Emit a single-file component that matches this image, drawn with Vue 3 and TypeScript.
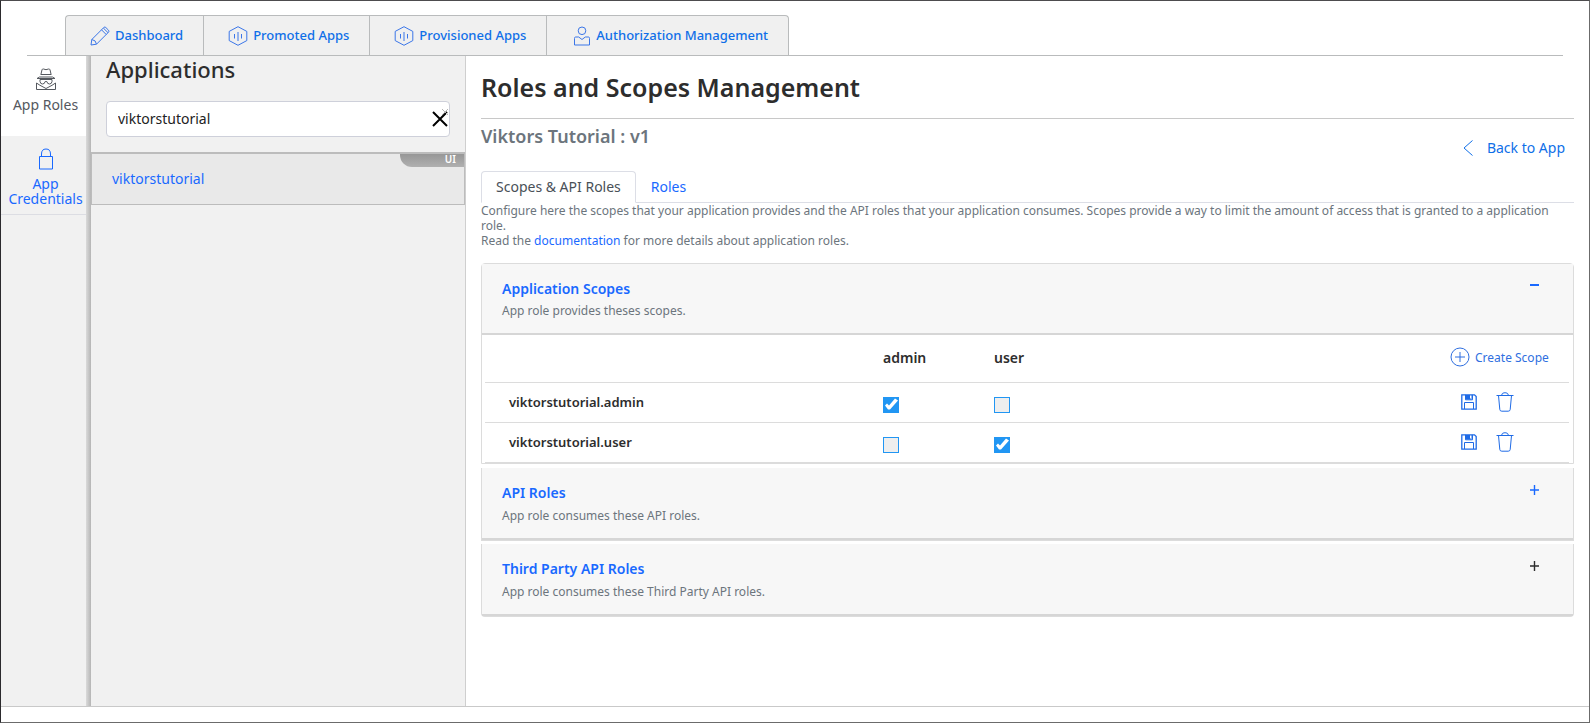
<script setup lang="ts">
import { ref } from 'vue'

interface TopTab { label: string; icon: 'pencil' | 'app' | 'user' }
interface Scope { name: string; admin: boolean; user: boolean }

const topTabs: TopTab[] = [
  { label: 'Dashboard', icon: 'pencil' },
  { label: 'Promoted Apps', icon: 'app' },
  { label: 'Provisioned Apps', icon: 'app' },
  { label: 'Authorization Management', icon: 'user' },
]

const search = ref('viktorstutorial')

const scopes = ref<Scope[]>([
  { name: 'viktorstutorial.admin', admin: true, user: false },
  { name: 'viktorstutorial.user', admin: false, user: true },
])
</script>

<template>
  <div class="shell">
    <nav class="topbar" aria-label="Main">
      <a v-for="tab in topTabs" :key="tab.label" href="#" class="toptab">
        <svg v-if="tab.icon === 'pencil'" width="20" height="20" viewBox="0 0 20 20">
          <path d="M1 19l.8-5.500L13.800 1.500q1-1 2 0l2.700 2.700q1 1 0 2L6.500 18.200zM11.500 3.800l4.700 4.700M13.300 2l4.700 4.700M1.800 13.500q4.200.5 4.700 4.700" />
        </svg>
        <svg v-else-if="tab.icon === 'app'" width="20" height="20" viewBox="0 0 20 20">
          <path d="M10 .7l8.800 4.700v9.200L10 19.300l-8.800-4.700V5.400z" />
          <path d="M6.500 8v4.500M10 6v9M13.500 8v4.500" />
        </svg>
        <svg v-else width="20" height="20" viewBox="-2 0 20 20">
          <circle cx="9" cy="4.800" r="3.800" />
          <path d="M2.500 11h3.200L9 13.500l3.300-2.500h3.200q1 0 1 1.500v6.500h-15v-6.500q0-1.500 1-1.500z" />
        </svg>
        <span>{{ tab.label }}</span>
      </a>
    </nav>

    <div class="body">
      <nav class="rail" aria-label="Application settings">
        <a href="#" class="rail-item active">
          <svg width="20" height="22" viewBox="0 0 20 22">
            <path d="M5 6l1-4.200Q6.300.700 7.500 1L10 1.700 12.500 1q1.200-.300 1.500.800L15 6M4.500 6.500h11M3.500 9l-2.500 1.500h18L16.500 9zM4 11.500h12v2q-.3 2.500-2.500 2.500t-2.700-2.500H9.200Q8.700 16 6.500 16T4 13.500zM.500 21.500V15l3.500 2.300 6 3.200 6-3.200 3.500-2.300v6.500z" />
          </svg>
          <span>App Roles</span>
        </a>
        <a href="#" class="rail-item">
          <svg width="16" height="22" viewBox="0 0 16 22">
            <path d="M1.500 8.500h13v12.500h-13zM3.500 8.500V6Q3.500 1 8 1t4.500 5v2.500" />
          </svg>
          <span>App Credentials</span>
        </a>
      </nav>

      <aside class="apps">
        <h2>Applications</h2>
        <div class="search">
          <input v-model="search" type="text" aria-label="Search applications" />
          <button type="button" class="clear" aria-label="Clear search" @click="search = ''">
            <svg class="mini" width="8" height="8" viewBox="0 0 8 8"><path d="M1 1l6 6M7 1L1 7" /></svg>
            <svg width="16" height="16" viewBox="0 0 16 16"><path d="M1 1l14 14M15 1L1 15" /></svg>
          </button>
        </div>
        <a href="#" class="app-row">
          viktorstutorial
          <span class="badge">UI</span>
        </a>
      </aside>

      <main class="main">
        <h1>Roles and Scopes Management</h1>
        <div class="subhead">
          <h3>Viktors Tutorial : v1</h3>
          <a href="#" class="back">
            <svg width="10" height="16" viewBox="0 0 10 16"><path d="M9.500.5L1 8l8.500 7.500" /></svg>
            <span>Back to App</span>
          </a>
        </div>
        <div class="tabs" role="tablist">
          <button type="button" role="tab" aria-selected="true" class="tab current">Scopes &amp; API Roles</button>
          <button type="button" role="tab" aria-selected="false" class="tab">Roles</button>
        </div>
        <p class="intro">
          Configure here the scopes that your application provides and the API roles that your application consumes. Scopes provide a way to limit the amount of access that is granted to a application role.<br />
          Read the <a href="#">documentation</a> for more details about application roles.
        </p>

        <section class="card first">
          <header class="card-head">
            <div>
              <h4>Application Scopes</h4>
              <p>App role provides theses scopes.</p>
            </div>
            <button type="button" class="toggle" aria-label="Collapse Application Scopes">
              <svg width="10" height="10" viewBox="0 0 10 10"><path d="M0 4h9" stroke-width="2" /></svg>
            </button>
          </header>
          <table>
            <thead>
              <tr>
                <th class="name"></th>
                <th class="role">admin</th>
                <th>user</th>
                <th class="actions">
                  <button type="button" class="create">
                    <svg width="20" height="20" viewBox="0 0 20 20"><circle cx="10" cy="10" r="9" /><path d="M10 5v10M5 10h10" /></svg>
                    Create Scope
                  </button>
                </th>
              </tr>
            </thead>
            <tbody>
              <tr v-for="scope in scopes" :key="scope.name">
                <th class="name" scope="row">{{ scope.name }}</th>
                <td><input v-model="scope.admin" type="checkbox" :aria-label="scope.name + ' for admin'" /></td>
                <td><input v-model="scope.user" type="checkbox" :aria-label="scope.name + ' for user'" /></td>
                <td class="actions">
                  <div class="row-actions">
                    <button type="button" aria-label="Save">
                      <svg width="16" height="16" viewBox="0 0 16 16">
                        <path d="M.8.800h12.700l1.700 1.700v12.700H.8z" stroke-width="1.300" />
                        <path d="M3.500 15V8.500h9V15M3.500 11h0M4.500.800v5h7v-5" />
                        <path class="solid" d="M5 1h5.500v4.500H5z" />
                        <path class="gap" d="M9.500 1.500v3" />
                      </svg>
                    </button>
                    <button type="button" aria-label="Delete">
                      <svg width="18" height="20" viewBox="0 0 18 20">
                        <path d="M.5 3.500h17M5.500 3.500Q6 .8 8 .8h2q2 0 2.500 2.700M2.500 3.500l1.300 14q.2 1.700 2 1.700h6.400q1.800 0 2-1.700l1.300-14" />
                      </svg>
                    </button>
                  </div>
                </td>
              </tr>
            </tbody>
          </table>
        </section>

        <section class="card closed">
          <header class="card-head">
            <div>
              <h4>API Roles</h4>
              <p>App role consumes these API roles.</p>
            </div>
            <button type="button" class="toggle" aria-label="Expand API Roles">
              <svg width="10" height="10" viewBox="0 0 10 10"><path d="M0 5h9M4.500 0v10" stroke-width="1.400" /></svg>
            </button>
          </header>
        </section>

        <section class="card closed last">
          <header class="card-head">
            <div>
              <h4>Third Party API Roles</h4>
              <p>App role consumes these Third Party API roles.</p>
            </div>
            <button type="button" class="toggle dark" aria-label="Expand Third Party API Roles">
              <svg width="10" height="10" viewBox="0 0 10 10"><path d="M0 5h9M4.500 0v10" stroke-width="1.400" /></svg>
            </button>
          </header>
        </section>
      </main>
    </div>
  </div>
</template>

<style>
body {
  margin: 0;
  background: #fff;
}
</style>

<style scoped>
* {
  box-sizing: border-box;
}
.shell {
  min-height: 100vh;
  display: flex;
  flex-direction: column;
  border: 1px solid #6b6b6b;
  border-top-color: #4d4c4e;
  border-left-color: #2b2a2d;
  padding-bottom: 15px;
  font-family: "Noto Sans", "Open Sans", sans-serif;
  font-size: 14px;
  line-height: 15px;
  color: #2d2d2d;
}
h1, h2, h3, h4, p {
  margin: 0;
}
a {
  color: #1969ff;
  text-decoration: none;
}
button {
  font: inherit;
  color: #1969ff;
  background: none;
  border: 0;
  padding: 0;
  cursor: pointer;
}
svg {
  display: block;
  flex: none;
  fill: none;
  stroke: currentColor;
}
.topbar {
  display: flex;
  margin: 14px 26px 0;
  padding-left: 38px;
  border-bottom: 1px solid #b9bbbc;
}
.toptab {
  display: flex;
  align-items: center;
  gap: 5px;
  height: 40px;
  padding: 0 20px 0 24px;
  border: 1px solid #b9bbbc;
  border-width: 1px 0 0 1px;
  background: #f0f0f0;
  color: #0f6fe8;
  font-size: 13px;
  font-weight: 500;
}
.toptab svg {
  stroke: #3b76e8;
}
.toptab:first-child {
  border-top-left-radius: 4px;
}
.toptab:last-child {
  border-right-width: 1px;
  border-top-right-radius: 4px;
}
.body {
  flex: 1;
  display: flex;
  border-bottom: 1px solid #c9c9c9;
}
.rail {
  width: 90px;
  flex: none;
  padding-right: 5px;
  background: linear-gradient(to left, #b5b5b5, #dadada 5px, #f1f1f1 5px);
}
.rail-item {
  display: flex;
  flex-direction: column;
  align-items: center;
  gap: 6px;
  height: 79px;
  padding: 12px 0 0 4px;
  text-align: center;
  border-bottom: 1px solid #dcdde3;
}
.rail-item.active {
  height: 80px;
  gap: 7px;
  color: #54585e;
  background: #fff;
  border-bottom: 0;
}
.apps {
  width: 375px;
  flex: none;
  background: #f1f1f1;
  border-right: 1px solid #cfcfcf;
}
h2 {
  padding: 1px 15px 0;
  font-size: 22px;
  line-height: 24px;
  font-weight: 500;
}
.search {
  position: relative;
  margin: 20px 15px 15px;
}
.search input {
  display: block;
  width: 100%;
  height: 36px;
  padding: 0 30px 2px 11px;
  border: 1px solid #ced0da;
  border-radius: 4px;
  background: #fff;
  font: inherit;
  color: #222;
  outline: 0;
}
.clear {
  position: absolute;
  right: 2px;
  top: 10px;
  color: #000;
}
.clear svg {
  stroke-width: 2;
}
.clear .mini {
  position: absolute;
  right: -1px;
  top: -3px;
  stroke: #b5b5b5;
  stroke-width: 1;
}
.app-row {
  position: relative;
  display: flex;
  align-items: center;
  height: 53px;
  padding: 0 20px 2px;
  border: 1px solid #bcbcbc;
  border-top-width: 2px;
  background: #e9e9e9;
}
.badge {
  position: absolute;
  right: 0;
  top: 0;
  width: 64px;
  height: 13px;
  padding-right: 8px;
  border-bottom-left-radius: 12px;
  background: linear-gradient(#979797, #b0b0b0);
  color: #fff;
  font-size: 10px;
  line-height: 11px;
  font-weight: 600;
  text-align: right;
}
.main {
  flex: 1;
  min-width: 0;
  padding: 16px 15px 16px;
}
h1 {
  padding-bottom: 16px;
  border-bottom: 1px solid #c8c8c8;
  font-size: 25px;
  line-height: 30px;
  font-weight: 600;
}
.subhead {
  display: flex;
  justify-content: space-between;
  height: 52px;
  padding: 7px 9px 0 0;
}
h3 {
  font-size: 18px;
  line-height: 20px;
  font-weight: 600;
  color: #6c757d;
}
.back {
  display: flex;
  align-items: center;
  align-self: flex-start;
  gap: 14px;
  height: 16px;
  margin-top: 14px;
  color: #0f6fe8;
}
.back span {
  padding-bottom: 2px;
}
.tabs {
  display: flex;
  border-bottom: 1px solid #dcdee6;
}
.tab {
  height: 32px;
  margin-bottom: -1px;
  padding: 0 14px 2px;
  border: 1px solid transparent;
  border-radius: 4px 4px 0 0;
}
.tab.current {
  color: #495057;
  background: #fff;
  border-color: #dcdee6;
  border-bottom-color: #fff;
}
.intro {
  margin: 0 0 15px;
  font-size: 12px;
  color: #6c757d;
}
.card {
  border: 1px solid #dcdcdc;
  border-top: 0;
  margin-bottom: 4px;
}
.card.first {
  border-top: 1px solid #dcdcdc;
  border-radius: 4px 4px 0 0;
}
.card.closed {
  margin-bottom: 3px;
}
.card.last {
  border-radius: 0 0 4px 4px;
}
.card-head {
  display: flex;
  justify-content: space-between;
  height: 72px;
  padding: 17px 33px 0 20px;
  background: #f7f7f7;
  border-bottom: 2px solid #d6d6d6;
}
.first .card-head {
  height: 71px;
}
h4 {
  font-size: 14px;
  line-height: 16px;
  font-weight: 600;
  color: #1969ff;
}
.card-head p {
  margin-top: 6px;
  font-size: 12px;
  color: #6c757d;
}
.closed .card-head p {
  margin-top: 7px;
}
.toggle {
  align-self: flex-start;
}
.toggle.dark {
  color: #2d2d2d;
}
table {
  width: calc(100% - 7px);
  margin-left: 3px;
  border-collapse: collapse;
  table-layout: fixed;
}
th, td {
  height: 40px;
  padding: 0;
  border-bottom: 1px solid #dcdcdc;
  text-align: left;
  vertical-align: middle;
  font-weight: 600;
}
thead th {
  height: 47px;
  padding-bottom: 2px;
}
th.name {
  width: 398px;
  padding-left: 24px;
  font-size: 13px;
}
th.role {
  width: 111px;
}
.actions {
  width: 119px;
}
.create {
  display: flex;
  align-items: center;
  gap: 5px;
  font-size: 12px;
  font-weight: 400;
  color: #2f6fe0;
}
.row-actions {
  display: flex;
  align-items: center;
  gap: 19px;
  padding-left: 11px;
}
.row-actions button {
  color: #1f6be6;
}
.solid {
  fill: currentColor;
  stroke: none;
}
.gap {
  stroke: #fff;
}
input[type="checkbox"] {
  display: block;
  appearance: none;
  width: 16px;
  height: 16px;
  margin: 5px 0 0;
  border: 1px solid #2196f3;
  background: #eee;
}
input[type="checkbox"]:checked {
  background: #2196f3;
}
input[type="checkbox"]:checked::before {
  content: "";
  display: block;
  width: 14px;
  height: 14px;
  background: #fff;
  clip-path: polygon(1px 8px, 3px 6px, 5px 8px, 11px 1px, 14px 3px, 6px 12px, 4px 12px);
}
</style>
